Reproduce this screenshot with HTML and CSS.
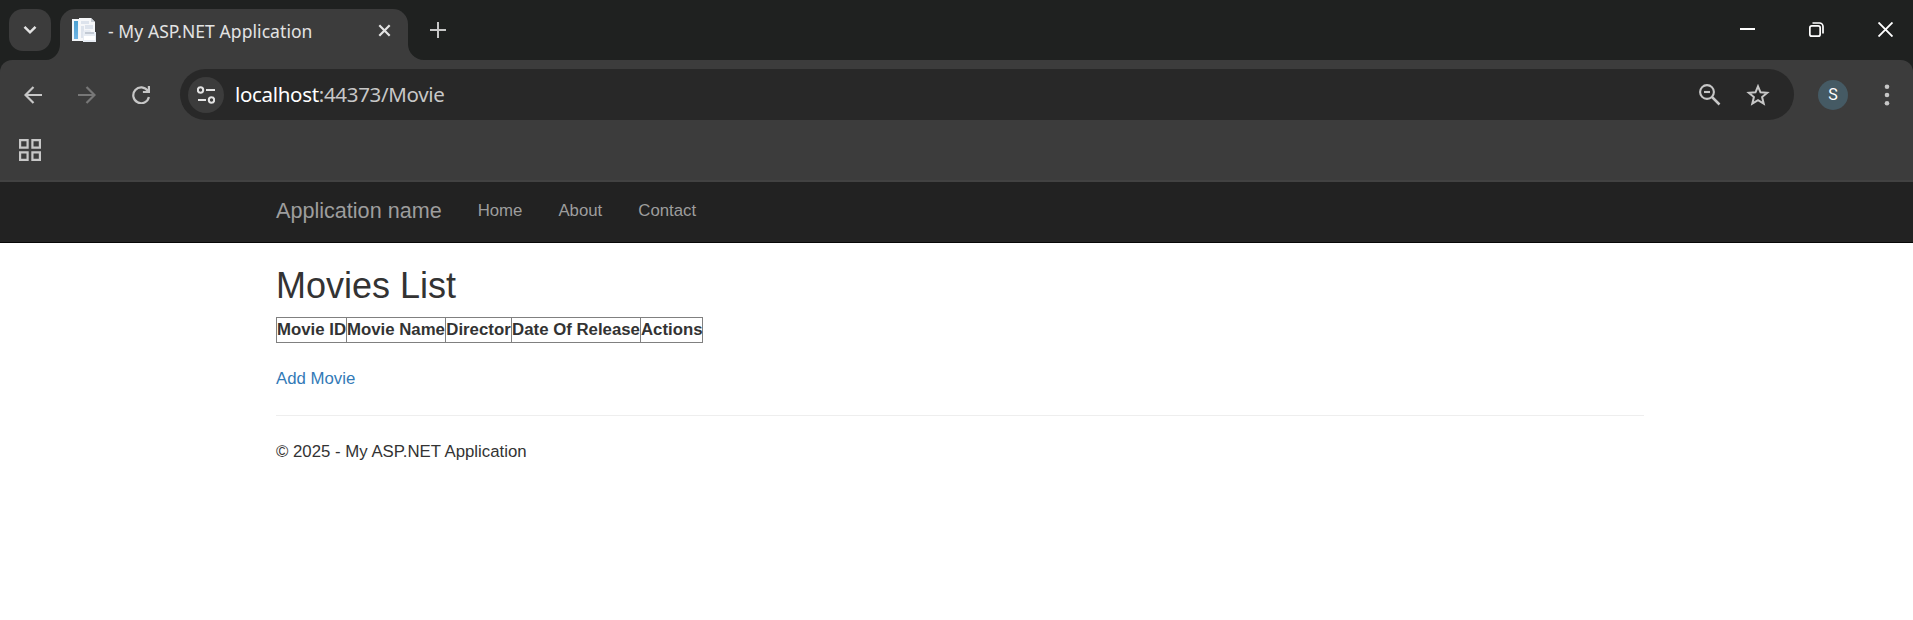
FILE: index.html
```
<!DOCTYPE html>
<html lang="en">
<head>
<meta charset="utf-8">
<title>- My ASP.NET Application</title>
<link rel="stylesheet" href="styles.css">
</head>
<body>
<header class="browser">
  <div class="tabstrip">
    <button class="tab-search" aria-label="Search tabs"><svg width="14" height="10" viewBox="0 0 14 10"><path d="M1.500 1.800L7 7.300l5.500-5.500" fill="none" stroke="#e3e3e3" stroke-width="2.500"/></svg></button>
    <div class="tab">
      <svg class="flare" width="14" height="16" viewBox="0 0 14 16"><path d="M14 0v16H0A14 16 0 0 0 14 0z" fill="#3c3c3c"/></svg>
      <svg class="favicon" width="24" height="24" viewBox="0 0 24 24">
        <defs><linearGradient id="blue" x1="0" y1="0" x2="0" y2="1"><stop offset="0" stop-color="#4a9fd0"/><stop offset="1" stop-color="#6fb4e4"/></linearGradient></defs>
        <path d="M0 1h9v22H0z" fill="#f2f5f8"/><path d="M2 3h4v18H2z" fill="url(#blue)"/>
        <path d="M7 0h12l4 4v19H7z" fill="#f6f7f9"/><path d="M19 0v4h4z" fill="#c9ced5"/>
        <path d="M9 3h8v3H9zM9 8h3v12H9zM13 7h8v4h-8z" fill="#dde3ec"/>
        <path d="M11 14l2-2h5l1 2h5v10H11z" fill="#e7ecf3"/><path d="M13 14h9v2h-9z" fill="#c3cad4"/><path d="M12 18h11v4H12z" fill="#fff"/>
      </svg>
      <span class="tab-title">- My ASP.NET Application</span>
      <svg class="tab-close" width="13" height="13" viewBox="0 0 13 13"><path d="M1.300 1.300l10.400 10.400M11.700 1.300L1.300 11.700" stroke="#e3e3e3" stroke-width="2.200"/></svg>
      <svg class="flare flare-right" width="16" height="16" viewBox="0 0 16 16"><path d="M0 0v16h16A16 16 0 0 1 0 0z" fill="#3c3c3c"/></svg>
    </div>
    <svg class="new-tab" width="16" height="16" viewBox="0 0 16 16"><path d="M8 0v16M0 8h16" stroke="#c7c7c7" stroke-width="2"/></svg>
    <div class="window-controls">
      <svg width="15" height="15" viewBox="0 0 15 15"><path d="M0 7h15" stroke="#fff" stroke-width="2"/></svg>
      <svg width="15" height="15" viewBox="0 0 15 15" fill="none" stroke="#fff" stroke-width="1.700"><rect x=".85" y="3.850" width="10.300" height="10.300" rx="2"/><path d="M3.500 1h7a3.500 3.500 0 0 1 3.500 3.500v7"/></svg>
      <svg width="15" height="15" viewBox="0 0 15 15"><path d="M.5.5l14 14M14.500.5l-14 14" stroke="#fff" stroke-width="1.900"/></svg>
    </div>
  </div>
  <div class="toolbar">
    <svg class="nav-icon" width="18" height="18" viewBox="0 0 18 18"><path d="M18 9H1.500M9.500 1L1.500 9l8 8" fill="none" stroke="#c7c7c7" stroke-width="2.200"/></svg>
    <svg class="nav-icon" width="18" height="18" viewBox="0 0 18 18"><path d="M0 9h16.500M8.500 1l8 8-8 8" fill="none" stroke="#777" stroke-width="2.200"/></svg>
    <svg class="nav-icon" width="18" height="18" viewBox="0 0 18 18"><path d="M15.800 5A7.900 7.900 0 1 0 16.900 11M16.900 0v6h-6" fill="none" stroke="#c7c7c7" stroke-width="2.200"/></svg>
    <div class="omnibox">
      <span class="site-info"><svg width="18" height="18" viewBox="0 0 18 18" fill="none" stroke="#e3e3e3" stroke-width="2"><circle cx="3.500" cy="4" r="2.700"/><path d="M9 4h9M1 14h8"/><circle cx="14.500" cy="14" r="2.700"/></svg></span>
      <span class="url"><span class="host">localhost</span>:44373/Movie</span>
      <svg class="zoom-icon" width="22" height="22" viewBox="0 0 22 22"><g fill="none" stroke="#c7c7c7" stroke-width="2.100"><circle cx="8" cy="8" r="6.900"/><path d="M5 8h6"/><path d="M13 13l7.500 7.500" stroke-width="2.500"/></g></svg>
      <svg class="star-icon" width="24" height="22" viewBox="0 0 24 22"><path d="M12 2.300l2.500 6 6.700.5-5.100 4.300 1.600 6.600-5.700-3.500-5.700 3.500 1.600-6.600-5.100-4.300 6.700-.5z" fill="none" stroke="#c7c7c7" stroke-width="2"/></svg>
    </div>
    <span class="avatar">S</span>
    <svg class="menu" width="6" height="22" viewBox="0 0 6 22" fill="#c7c7c7"><circle cx="3" cy="2.700" r="2.300"/><circle cx="3" cy="11" r="2.300"/><circle cx="3" cy="19.300" r="2.300"/></svg>
  </div>
  <div class="bookmarks">
    <svg width="22" height="22" viewBox="0 0 22 22" fill="none" stroke="#c7c7c7" stroke-width="2.200"><path d="M1.100 1.100h7.500v7.500H1.100zM13.400 1.100h7.500v7.500h-7.500zM1.100 13.400h7.500v7.500H1.100zM13.400 13.400h7.500v7.500h-7.500z"/></svg>
  </div>
</header>
<nav class="navbar">
  <div class="container nav-row">
    <a class="brand">Application name</a>
    <a class="nav-link">Home</a>
    <a class="nav-link">About</a>
    <a class="nav-link">Contact</a>
  </div>
</nav>
<main class="container">
  <h2 class="heading">Movies List</h2>
  <table class="movies">
    <colgroup><col class="col-id"><col class="col-name"><col class="col-director"><col class="col-date"><col class="col-actions"></colgroup>
    <tr><th>Movie ID</th><th>Movie Name</th><th>Director</th><th>Date Of Release</th><th>Actions</th></tr>
  </table>
  <div><a class="add-link">Add Movie</a></div>
  <hr class="rule">
  <footer>© 2025 - My ASP.NET Application</footer>
</main>
</body>
</html>
```
FILE: styles.css
```
* { box-sizing: border-box; }
body {
  margin: 0;
  height: 620px;
  overflow: hidden;
  background: #fff;
  color: #333;
  font: 16.8px/24px "Liberation Sans", Arial, sans-serif;
}
svg { display: block; flex: none; }

.browser {
  height: 182px;
  background: #1f2120;
  font-family: "Noto Sans", "Open Sans", sans-serif;
}
.tabstrip { display: flex; height: 60px; padding: 9px 20px 0 9px; }
.tab-search {
  display: flex;
  align-items: center;
  justify-content: center;
  width: 42px;
  height: 42px;
  padding: 0;
  border: 0;
  border-radius: 14px;
  background: #3c3c3c;
}
.tab {
  position: relative;
  display: flex;
  width: 348px;
  height: 51px;
  margin-left: 9px;
  padding: 9px 17px 0 12px;
  border-radius: 15px 15px 0 0;
  background: #3c3c3c;
}
.flare { position: absolute; left: -14px; bottom: 0; }
.flare-right { left: auto; right: -16px; }
.tab-title {
  margin-left: 12px;
  color: #e3e3e3;
  font-size: 17.5px;
  line-height: 26px;
  letter-spacing: 0.07px;
  white-space: nowrap;
}
.tab-close { margin: 6px 0 0 auto; }
.new-tab { margin: 13px 0 0 22px; }
.window-controls { display: flex; gap: 54px; margin: 13px 0 0 auto; }

.toolbar {
  display: flex;
  align-items: center;
  height: 70px;
  padding: 9px 23px 10px 24px;
  border-radius: 12px 12px 0 0;
  background: #3c3c3c;
}
.nav-icon { margin-right: 36px; }
.omnibox {
  display: flex;
  align-items: center;
  width: 1614px;
  height: 51px;
  margin-left: -6px;
  padding: 0 24px 0 8px;
  border-radius: 26px;
  background: #282828;
}
.site-info {
  display: flex;
  align-items: center;
  justify-content: center;
  width: 36px;
  height: 36px;
  border-radius: 50%;
  background: #3c3c3c;
}
.url {
  margin-left: 11px;
  padding-bottom: 2px;
  color: #c7c7c7;
  font-size: 20.5px;
  line-height: 30px;
  letter-spacing: -0.32px;
  white-space: nowrap;
}
.host { color: #fff; }
.zoom-icon { margin-left: auto; }
.star-icon { margin-left: 25px; }
.avatar {
  width: 30px;
  height: 30px;
  margin-left: 24px;
  border-radius: 50%;
  background: #455a64;
  color: #fff;
  font: 16px/30px Roboto, sans-serif;
  text-align: center;
}
.menu { margin-left: auto; }
.bookmarks { height: 52px; padding: 9px 19px; background: #3c3c3c; border-bottom: 2px solid #424242; }

.navbar { height: 61px; background: #222; border-bottom: 1px solid #080808; }
.container { width: 1368px; margin: 0 0 0 276px; }
.nav-row { display: flex; gap: 36px; padding-top: 17.4px; color: #9d9d9d; }
.brand { font-size: 21.6px; }
.heading { margin: 23px 0 12px; font-size: 36px; font-weight: 400; line-height: 39.4px; }
.movies { width: 427px; margin-bottom: 23.6px; border-collapse: collapse; table-layout: fixed; }
.movies th { padding: 0; border: 1px solid #808080; white-space: nowrap; }
.col-id { width: 70px; }
.col-name { width: 99px; }
.col-director { width: 66px; }
.col-date { width: 129px; }
.col-actions { width: 62px; }
.add-link { color: #337ab7; }
.rule { margin: 24px 0 23.6px; border: 0; border-top: 1px solid #eee; }
```
